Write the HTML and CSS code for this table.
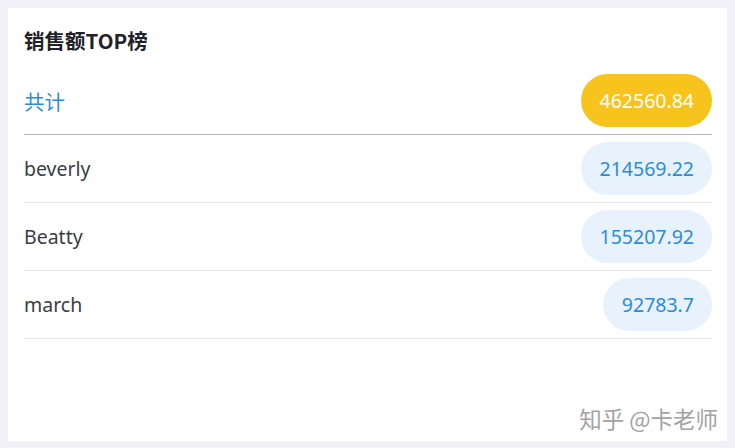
FILE: index.html
```html
<!DOCTYPE html>
<html lang="zh">
<head>
<meta charset="utf-8">
<link rel="stylesheet" href="styles.css">
</head>
<body>
<div class="card">
  <h2 class="title">销售额TOP榜</h2>
  <ul class="list">
    <li class="row total"><span class="name">共计</span><span class="pill pill-total">462560.84</span></li>
    <li class="row"><span class="name">beverly</span><span class="pill">214569.22</span></li>
    <li class="row"><span class="name">Beatty</span><span class="pill">155207.92</span></li>
    <li class="row"><span class="name">march</span><span class="pill">92783.7</span></li>
  </ul>
  <div class="watermark">知乎 @卡老师</div>
</div>
</body>
</html>
```
FILE: styles.css
```css
html, body {
  margin: 0;
  padding: 0;
  background: #f0f0f6;
}
body {
  padding: 8px 8px 7px 8px;
  font-family: "Noto Sans", "Noto Sans CJK SC", sans-serif;
}
.card {
  background: #ffffff;
  height: 433px;
  box-sizing: border-box;
  padding: 16px 15px 8px 16px;
  display: flex;
  flex-direction: column;
}
.title {
  margin: 0;
  font-size: 20.5px;
  font-weight: bold;
  color: #1f2329;
  line-height: 32px;
  height: 43px;
  font-family: "Noto Sans CJK SC", sans-serif;
}
.list {
  list-style: none;
  margin: 0;
  padding: 0;
}
.row {
  display: flex;
  align-items: center;
  justify-content: space-between;
  padding: 7px 0;
  border-bottom: 1px solid #e9e9ee;
}
.row.total {
  border-bottom-color: #b5b5b8;
}
.name {
  font-size: 19.5px;
  color: #3a3d44;
}
.total .name {
  color: #2d8cd9;
  font-size: 20.5px;
  font-family: "Noto Sans CJK SC", sans-serif;
}
.pill {
  height: 53px;
  line-height: 53px;
  padding: 0 18px 0 19px;
  border-radius: 27px;
  background: #e7f2fc;
  color: #2d8cd9;
  font-size: 19.5px;
}
.pill-total {
  background: #f7c31d;
  color: #ffffff;
}
.watermark {
  margin-top: auto;
  align-self: flex-end;
  font-size: 22.5px;
  line-height: 30px;
  color: #a3a3a3;
  text-shadow: 0 0 1px #ffffff;
  margin-right: -6px;
  font-family: "Noto Sans CJK SC", sans-serif;
}
```
